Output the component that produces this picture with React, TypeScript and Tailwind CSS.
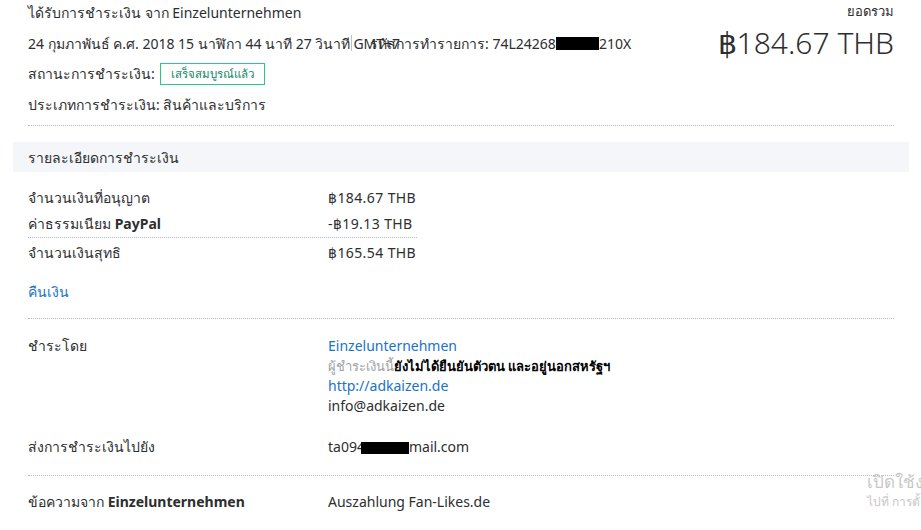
import React from "react";

const Dotted = () => <div className="border-t border-dotted border-[#b7bcbf]" />;

export default function App() {
  return (
    <div className="relative w-[921px] h-[530px] overflow-hidden bg-white text-[14px] text-[#2c2e2f]" style={{ fontFamily: '"Noto Sans", "Open Sans", sans-serif' }}>
      <div className="pl-[28px] pr-[27px]">
        {/* Header */}
        <div className="flex justify-between">
          <div className="flex flex-col">
            <div className="h-[28px] pb-[4px] flex items-center">ได้รับการชำระเงิน จาก Einzelunternehmen</div>
            <div className="h-[30px] flex items-center whitespace-nowrap">
              <span>24 กุมภาพันธ์ ค.ศ. 2018 15 นาฬิกา 44 นาที 27 วินาที</span>
              <span className="inline-block w-px h-[16px] bg-[#c0c0c0] mx-[1px]" />
              <span>GMT+7</span>
              <span className="-ml-[30px]">รหัสการทำรายการ: 74L24268</span>
              <span className="inline-block w-[43px] h-[13px] bg-black" />
              <span>210X</span>
            </div>
            <div className="h-[31px] flex items-center">
              <span>สถานะการชำระเงิน:</span>
              <span className="ml-[5px] border border-[#2dc393] px-[10px] h-[22px] flex items-center text-[11.5px] text-[#128766]">เสร็จสมบูรณ์แล้ว</span>
            </div>
            <div className="h-[30px] flex items-center">ประเภทการชำระเงิน: สินค้าและบริการ</div>
          </div>
          <div className="flex flex-col items-end">
            <div className="h-[28px] pb-[4px] flex items-center text-[13px]">ยอดรวม</div>
            <div className="text-[30px] leading-[30px] font-light">฿184.67 THB</div>
          </div>
        </div>
        <div className="mt-[6px]"><Dotted /></div>

        {/* Section header */}
        <div className="-ml-[15px] -mr-[15px] mt-[16px] h-[30px] bg-[#f5f6fa] flex items-center pl-[15px]">รายละเอียดการชำระเงิน</div>

        <div className="mt-[12px] w-[389px]">
          <div className="h-[26px] flex items-center">
            <span className="w-[300px]">จำนวนเงินที่อนุญาต</span>
            <span className="tracking-[0.4px]">฿184.67 THB</span>
          </div>
          <div className="h-[27px] flex items-center">
            <span className="w-[300px]">ค่าธรรมเนียม <b>PayPal</b></span>
            <span className="tracking-[0.4px]">-฿19.13 THB</span>
          </div>
          <Dotted />
          <div className="h-[28px] flex items-center">
            <span className="w-[300px]">จำนวนเงินสุทธิ</span>
            <span className="tracking-[0.4px]">฿165.54 THB</span>
          </div>
        </div>

        <div className="mt-[12px] h-[26px] flex items-center text-[#1a73c4]">คืนเงิน</div>
        <div className="mt-[14px]"><Dotted /></div>

        <div className="mt-[17px] flex">
          <div className="w-[300px] leading-[20px]">ชำระโดย</div>
          <div className="flex flex-col leading-[20px]">
            <span className="text-[#1a73c4]">Einzelunternehmen</span>
            <span className="text-[13px]"><span className="text-[#9da3a6]">ผู้ชำระเงินนี้</span><b className="text-black">ยังไม่ได้ยืนยันตัวตน และอยู่นอกสหรัฐฯ</b></span>
            <span className="text-[#1a73c4]">http://adkaizen.de</span>
            <span>info@adkaizen.de</span>
          </div>
        </div>

        <div className="mt-[20px] flex items-center h-[20px]">
          <div className="w-[300px]">ส่งการชำระเงินไปยัง</div>
          <div className="flex items-center whitespace-nowrap">
            <span>ta094</span>
            <span className="inline-block w-[48px] h-[12px] bg-black -ml-[4px] mt-[4px]" />
            <span>mail.com</span>
          </div>
        </div>

        <div className="mt-[19px]"><Dotted /></div>

        <div className="mt-[15px] flex items-center h-[20px]">
          <div className="w-[300px]">ข้อความจาก <b>Einzelunternehmen</b></div>
          <div>Auszahlung Fan-Likes.de</div>
        </div>
      </div>

      {/* Windows activation watermark */}
      <div className="absolute left-[867px] top-[471px] text-[#c8c8c8] whitespace-nowrap">
        <div className="text-[17px] leading-[22px]">เปิดใช้งาน Windows</div>
        <div className="text-[12px] leading-[18px]">ไปที่ การตั้งค่า เพื่อเปิดใช้งาน Windows</div>
      </div>
    </div>
  );
}
